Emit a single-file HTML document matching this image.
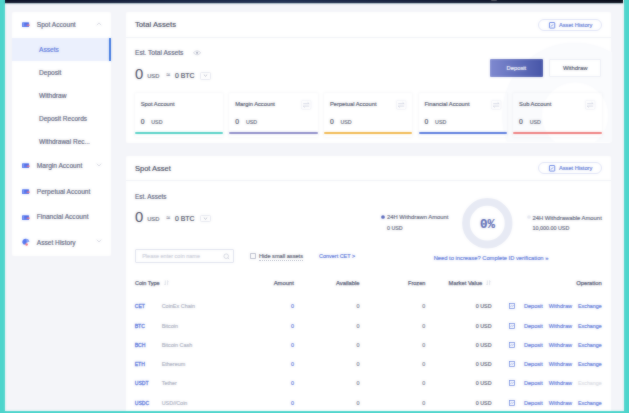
<!DOCTYPE html>
<html><head><meta charset="utf-8">
<style>
*{margin:0;padding:0;box-sizing:border-box}
html,body{width:629px;height:413px;overflow:hidden;background:#f4f5f9;font-family:"Liberation Sans",sans-serif;color:#3a3f55}
.a{position:absolute}
.t{position:absolute;white-space:nowrap;line-height:10px;height:10px;-webkit-text-stroke:0.15px currentColor}
svg{position:absolute;overflow:visible}
</style></head><body>
<div class="a" style="left:0;top:0;width:629px;height:413px;overflow:hidden;background:#f4f5f9">
<div class="a" style="left:12.00px;top:11.60px;width:99.30px;height:244.00px;background:#fff;border-radius:2px"></div>
<div class="a" style="left:12.00px;top:37.70px;width:97.00px;height:23.00px;background:#ebf0fd"></div>
<div class="a" style="left:109.00px;top:37.70px;width:2.30px;height:23.00px;background:#3a74df"></div>
<svg style="left:21.900000000000002px;top:22.0px" width="9" height="6" viewBox="0 0 9 6"><rect x="0" y="0.2" width="7.1" height="4.8" rx="0.6" fill="#5375ef"/><rect x="0.8" y="1.2" width="1.4" height="3" fill="#7f98f5"/><rect x="2.6" y="1.1" width="3.8" height="0.7" fill="#3f62e6"/><rect x="4.5" y="2.4" width="3.3" height="1.4" rx="0.5" fill="#f26a78"/></svg>
<div class="t" style="left:36.80px;top:19.80px;font-size:6.6px;color:#555a76;font-weight:normal;">Spot Account</div>
<svg style="left:96.3px;top:21.9px" width="6" height="4" viewBox="0 0 6 4"><path d="M0.8 3.2 L3 0.9 L5.2 3.2" fill="none" stroke="#bfc3d2" stroke-width="0.65"/></svg>
<div class="t" style="left:39.00px;top:45.00px;font-size:6.6px;color:#5371da;font-weight:normal;">Assets</div>
<div class="t" style="left:39.00px;top:67.60px;font-size:6.6px;color:#555a76;font-weight:normal;">Deposit</div>
<div class="t" style="left:39.00px;top:90.70px;font-size:6.6px;color:#555a76;font-weight:normal;">Withdraw</div>
<div class="t" style="left:39.00px;top:113.50px;font-size:6.5px;color:#555a76;font-weight:normal;">Deposit Records</div>
<div class="t" style="left:39.00px;top:137.00px;font-size:6.5px;color:#555a76;font-weight:normal;">Withdrawal Rec...</div>
<svg style="left:21.900000000000002px;top:162.9px" width="9" height="6" viewBox="0 0 9 6"><rect x="0" y="0.2" width="7.1" height="4.8" rx="0.6" fill="#5375ef"/><rect x="0.8" y="1.2" width="1.4" height="3" fill="#7f98f5"/><rect x="2.6" y="1.1" width="3.8" height="0.7" fill="#3f62e6"/><rect x="4.5" y="2.4" width="3.3" height="1.4" rx="0.5" fill="#f26a78"/></svg>
<div class="t" style="left:36.80px;top:160.70px;font-size:6.6px;color:#555a76;font-weight:normal;">Margin Account</div>
<svg style="left:96.3px;top:162.6px" width="6" height="4" viewBox="0 0 6 4"><path d="M0.8 0.7 L3 3 L5.2 0.7" fill="none" stroke="#bfc3d2" stroke-width="0.65"/></svg>
<svg style="left:21.900000000000002px;top:188.9px" width="9" height="6" viewBox="0 0 9 6"><rect x="0" y="0.2" width="7.1" height="4.8" rx="0.6" fill="#5375ef"/><rect x="0.8" y="1.2" width="1.4" height="3" fill="#7f98f5"/><rect x="2.6" y="1.1" width="3.8" height="0.7" fill="#3f62e6"/><rect x="4.5" y="2.4" width="3.3" height="1.4" rx="0.5" fill="#f26a78"/></svg>
<div class="t" style="left:36.80px;top:186.80px;font-size:6.6px;color:#555a76;font-weight:normal;">Perpetual Account</div>
<svg style="left:21.900000000000002px;top:214.5px" width="9" height="6" viewBox="0 0 9 6"><rect x="0" y="0.2" width="7.1" height="4.8" rx="0.6" fill="#5375ef"/><rect x="0.8" y="1.2" width="1.4" height="3" fill="#7f98f5"/><rect x="2.6" y="1.1" width="3.8" height="0.7" fill="#3f62e6"/><rect x="4.5" y="2.4" width="3.3" height="1.4" rx="0.5" fill="#f26a78"/></svg>
<div class="t" style="left:36.80px;top:212.30px;font-size:6.6px;color:#555a76;font-weight:normal;">Financial Account</div>
<svg style="left:21.8px;top:238.4px" width="8" height="8" viewBox="0 0 8 8"><path d="M0.2 4.2 A3.7 3.7 0 0 1 7.4 3.4 L4.6 4.6 L3.2 6.8 A3 3 0 0 1 0.2 4.2 Z" fill="#5173f0"/><path d="M4.2 0.7 A3.6 3.6 0 0 1 7.4 3.4 L4.6 4.4 Z" fill="#86a0f6"/><circle cx="4.6" cy="6.5" r="1.25" fill="#f2707c"/></svg>
<div class="t" style="left:36.80px;top:237.70px;font-size:6.6px;color:#555a76;font-weight:normal;">Asset History</div>
<svg style="left:96.3px;top:239.4px" width="6" height="4" viewBox="0 0 6 4"><path d="M0.8 0.7 L3 3 L5.2 0.7" fill="none" stroke="#bfc3d2" stroke-width="0.65"/></svg>
<div class="a" style="left:125.60px;top:12.30px;width:485.90px;height:130.80px;background:#fff;border-radius:2px"></div>
<svg style="left:480px;top:38.6px;overflow:hidden" width="131.5" height="103" viewBox="0 0 131.5 103"><circle cx="95" cy="76.4" r="53" fill="none" stroke="#fafbfd" stroke-width="40"/></svg>
<div class="a" style="left:125.60px;top:37.20px;width:485.90px;height:0.80px;background:#f0f2f7"></div>
<div class="t" style="left:135.00px;top:19.90px;font-size:7.7px;color:#3e4358;font-weight:normal;">Total Assets</div>
<div class="a" style="left:538.30px;top:19.10px;width:63.60px;height:11.50px;border:0.7px solid #dfe3f7;border-radius:6px;background:#fff"></div>
<svg style="left:548.8px;top:21.5px" width="6.2" height="6.5" viewBox="0 0 6.2 6.5"><rect x="0.45" y="0.5" width="5.3" height="5.6" rx="0.5" fill="none" stroke="#5b7ae0" stroke-width="0.9"/><path d="M1.7 4.4 L4.3 2.6" fill="none" stroke="#5b7ae0" stroke-width="0.7"/></svg>
<div class="t" style="left:559.00px;top:20.00px;font-size:5.65px;color:#5370d2;font-weight:normal;">Asset History</div>
<div class="t" style="left:135.00px;top:47.70px;font-size:6.6px;color:#555a76;font-weight:normal;">Est. Total Assets</div>
<svg style="left:193.4px;top:49.9px" width="8.2" height="5.6" viewBox="0 0 8.2 5.6"><path d="M0.4 2.8 Q4.1 -1.2 7.8 2.8 Q4.1 6.8 0.4 2.8 Z" fill="none" stroke="#bcc0cf" stroke-width="0.65"/><circle cx="4.1" cy="2.8" r="1.1" fill="#a9aec0"/></svg>
<div class="t" style="left:135.00px;top:68.80px;font-size:14.8px;color:#3d4258;font-weight:normal;-webkit-text-stroke:0">0</div>
<div class="t" style="left:147.20px;top:70.60px;font-size:5.8px;color:#5a5f74;font-weight:normal;">USD</div>
<div class="t" style="left:166.50px;top:69.60px;font-size:6.6px;color:#767b90;font-weight:normal;">&#8776;</div>
<div class="t" style="left:175.00px;top:70.80px;font-size:6.9px;color:#3a3f55;font-weight:normal;">0 BTC</div>
<div class="a" style="left:200.20px;top:71.70px;width:10.50px;height:7.90px;border:0.6px solid #e6e8f0;border-radius:1.5px;box-shadow:0 0 1px rgba(0,0,0,0.05)"></div>
<svg style="left:203px;top:74.3px" width="5" height="3" viewBox="0 0 5 3"><path d="M0.8 0.6 L2.5 2.2 L4.2 0.6" fill="none" stroke="#8a90a6" stroke-width="0.6"/></svg>
<div class="a" style="left:490.00px;top:59.10px;width:52.80px;height:17.60px;background:linear-gradient(90deg,#7f8ad0,#4756a8);border-radius:1px"></div>
<div class="t" style="left:416.40px;width:200px;text-align:center;top:62.90px;font-size:5.8px;color:#ffffff;font-weight:normal;">Deposit</div>
<div class="a" style="left:549.20px;top:59.10px;width:52.10px;height:17.60px;background:#fff;border:0.7px solid #eceef5;border-radius:1px"></div>
<div class="t" style="left:475.20px;width:200px;text-align:center;top:62.90px;font-size:5.9px;color:#4a4f66;font-weight:normal;">Withdraw</div>
<div class="a" style="left:134.70px;top:93.30px;width:88.50px;height:43.70px;box-shadow:0 0 3px rgba(40,50,90,0.07);border-radius:1px"></div>
<div class="a" style="left:134.70px;top:132.00px;width:88.50px;height:2.30px;background:#4fcfc4;border-radius:1.2px"></div>
<div class="t" style="left:140.70px;top:98.70px;font-size:5.75px;color:#4a4f66;font-weight:normal;">Spot Account</div>
<div class="t" style="left:140.70px;top:116.90px;font-size:6.8px;color:#3a3f55;font-weight:normal;">0</div>
<div class="t" style="left:151.30px;top:117.00px;font-size:5.3px;color:#5a5f74;font-weight:normal;">USD</div>
<div class="a" style="left:229.30px;top:93.30px;width:88.50px;height:43.70px;box-shadow:0 0 3px rgba(40,50,90,0.07);border-radius:1px"></div>
<div class="a" style="left:229.30px;top:132.00px;width:88.50px;height:2.30px;background:#8a89c6;border-radius:1.2px"></div>
<div class="t" style="left:235.30px;top:98.70px;font-size:5.75px;color:#4a4f66;font-weight:normal;">Margin Account</div>
<div class="t" style="left:235.30px;top:116.90px;font-size:6.8px;color:#3a3f55;font-weight:normal;">0</div>
<div class="t" style="left:245.90px;top:117.00px;font-size:5.3px;color:#5a5f74;font-weight:normal;">USD</div>
<svg style="left:301.29999999999995px;top:99.9px" width="10.4" height="9.8" viewBox="0 0 10.4 9.8"><rect x="0.35" y="0.35" width="9.7" height="9.1" rx="1.5" fill="#fff" stroke="#eceef5" stroke-width="0.7"/><path d="M2.2 3.7 H8.2 L6.6 2.3 M8.2 6.1 H2.2 L3.8 7.5" fill="none" stroke="#c3c8da" stroke-width="0.7"/></svg>
<div class="a" style="left:323.90px;top:93.30px;width:88.50px;height:43.70px;box-shadow:0 0 3px rgba(40,50,90,0.07);border-radius:1px"></div>
<div class="a" style="left:323.90px;top:132.00px;width:88.50px;height:2.30px;background:#f0b64a;border-radius:1.2px"></div>
<div class="t" style="left:329.90px;top:98.70px;font-size:5.75px;color:#4a4f66;font-weight:normal;">Perpetual Account</div>
<div class="t" style="left:329.90px;top:116.90px;font-size:6.8px;color:#3a3f55;font-weight:normal;">0</div>
<div class="t" style="left:340.50px;top:117.00px;font-size:5.3px;color:#5a5f74;font-weight:normal;">USD</div>
<svg style="left:395.9px;top:99.9px" width="10.4" height="9.8" viewBox="0 0 10.4 9.8"><rect x="0.35" y="0.35" width="9.7" height="9.1" rx="1.5" fill="#fff" stroke="#eceef5" stroke-width="0.7"/><path d="M2.2 3.7 H8.2 L6.6 2.3 M8.2 6.1 H2.2 L3.8 7.5" fill="none" stroke="#c3c8da" stroke-width="0.7"/></svg>
<div class="a" style="left:418.50px;top:93.30px;width:88.50px;height:43.70px;box-shadow:0 0 3px rgba(40,50,90,0.07);border-radius:1px"></div>
<div class="a" style="left:418.50px;top:132.00px;width:88.50px;height:2.30px;background:#5577dc;border-radius:1.2px"></div>
<div class="t" style="left:424.50px;top:98.70px;font-size:5.75px;color:#4a4f66;font-weight:normal;">Financial Account</div>
<div class="t" style="left:424.50px;top:116.90px;font-size:6.8px;color:#3a3f55;font-weight:normal;">0</div>
<div class="t" style="left:435.10px;top:117.00px;font-size:5.3px;color:#5a5f74;font-weight:normal;">USD</div>
<svg style="left:490.49999999999994px;top:99.9px" width="10.4" height="9.8" viewBox="0 0 10.4 9.8"><rect x="0.35" y="0.35" width="9.7" height="9.1" rx="1.5" fill="#fff" stroke="#eceef5" stroke-width="0.7"/><path d="M2.2 3.7 H8.2 L6.6 2.3 M8.2 6.1 H2.2 L3.8 7.5" fill="none" stroke="#c3c8da" stroke-width="0.7"/></svg>
<div class="a" style="left:513.10px;top:93.30px;width:88.50px;height:43.70px;box-shadow:0 0 3px rgba(40,50,90,0.07);border-radius:1px"></div>
<div class="a" style="left:513.10px;top:132.00px;width:88.50px;height:2.30px;background:#ee7b7b;border-radius:1.2px"></div>
<div class="t" style="left:519.10px;top:98.70px;font-size:5.75px;color:#4a4f66;font-weight:normal;">Sub Account</div>
<div class="t" style="left:519.10px;top:116.90px;font-size:6.8px;color:#3a3f55;font-weight:normal;">0</div>
<div class="t" style="left:529.70px;top:117.00px;font-size:5.3px;color:#5a5f74;font-weight:normal;">USD</div>
<svg style="left:585.0999999999999px;top:99.9px" width="10.4" height="9.8" viewBox="0 0 10.4 9.8"><rect x="0.35" y="0.35" width="9.7" height="9.1" rx="1.5" fill="#fff" stroke="#eceef5" stroke-width="0.7"/><path d="M2.2 3.7 H8.2 L6.6 2.3 M8.2 6.1 H2.2 L3.8 7.5" fill="none" stroke="#c3c8da" stroke-width="0.7"/></svg>
<div class="a" style="left:125.60px;top:155.60px;width:485.90px;height:264.40px;background:#fff;border-radius:2px"></div>
<div class="a" style="left:125.60px;top:179.90px;width:485.90px;height:0.80px;background:#f0f2f7"></div>
<div class="t" style="left:135.00px;top:163.50px;font-size:7.5px;color:#3e4358;font-weight:normal;">Spot Asset</div>
<div class="a" style="left:538.30px;top:162.30px;width:63.60px;height:11.50px;border:0.7px solid #dfe3f7;border-radius:6px;background:#fff"></div>
<svg style="left:548.8px;top:164.70000000000002px" width="6.2" height="6.5" viewBox="0 0 6.2 6.5"><rect x="0.45" y="0.5" width="5.3" height="5.6" rx="0.5" fill="none" stroke="#5b7ae0" stroke-width="0.9"/><path d="M1.7 4.4 L4.3 2.6" fill="none" stroke="#5b7ae0" stroke-width="0.7"/></svg>
<div class="t" style="left:559.00px;top:163.20px;font-size:5.65px;color:#5370d2;font-weight:normal;">Asset History</div>
<div class="t" style="left:135.00px;top:192.10px;font-size:6.35px;color:#555a76;font-weight:normal;">Est. Assets</div>
<div class="t" style="left:135.00px;top:212.00px;font-size:14.8px;color:#3d4258;font-weight:normal;-webkit-text-stroke:0">0</div>
<div class="t" style="left:147.20px;top:213.80px;font-size:5.8px;color:#5a5f74;font-weight:normal;">USD</div>
<div class="t" style="left:166.50px;top:212.80px;font-size:6.6px;color:#767b90;font-weight:normal;">&#8776;</div>
<div class="t" style="left:175.00px;top:214.00px;font-size:6.9px;color:#3a3f55;font-weight:normal;">0 BTC</div>
<div class="a" style="left:200.20px;top:214.60px;width:10.50px;height:7.90px;border:0.6px solid #e6e8f0;border-radius:1.5px;box-shadow:0 0 1px rgba(0,0,0,0.05)"></div>
<svg style="left:203px;top:217.2px" width="5" height="3" viewBox="0 0 5 3"><path d="M0.8 0.6 L2.5 2.2 L4.2 0.6" fill="none" stroke="#8a90a6" stroke-width="0.6"/></svg>
<svg style="left:380.6px;top:214.8px" width="4" height="4"><circle cx="2" cy="2" r="1.85" fill="#5161b9"/></svg>
<div class="t" style="left:387.00px;top:211.50px;font-size:5.85px;color:#585d75;font-weight:normal;">24H Withdrawn Amount</div>
<div class="t" style="left:387.00px;top:222.70px;font-size:5.33px;color:#585d75;font-weight:normal;">0 USD</div>
<svg style="left:462px;top:197.6px" width="51" height="51" viewBox="0 0 51 51"><circle cx="25.3" cy="25.2" r="21.3" fill="none" stroke="#e7eaf4" stroke-width="7.8"/></svg>
<div class="t" style="left:387.60px;width:200px;text-align:center;top:219.60px;font-size:12.5px;color:#5767b2;font-weight:bold;font-family:'Liberation Mono',monospace;">0%</div>
<svg style="left:526.5px;top:214.7px" width="4" height="4"><circle cx="2" cy="2" r="1.85" fill="#e6e8f0"/></svg>
<div class="t" style="left:532.40px;top:212.60px;font-size:5.87px;color:#585d75;font-weight:normal;">24H Withdrawable Amount</div>
<div class="t" style="left:532.40px;top:222.80px;font-size:5.42px;color:#585d75;font-weight:normal;">10,000.00 USD</div>
<div class="t" style="left:433.70px;top:253.00px;font-size:5.79px;color:#5470d6;font-weight:normal;">Need to increase? Complete ID verification &#187;</div>
<div class="a" style="left:134.90px;top:249.00px;width:98.80px;height:13.50px;border:0.7px solid #dfe2ee;border-radius:1px"></div>
<div class="t" style="left:142.20px;top:251.20px;font-size:5.5px;color:#c9ccd8;font-weight:normal;">Please enter coin name</div>
<svg style="left:222.6px;top:252.7px" width="7" height="7" viewBox="0 0 7 7"><circle cx="3.2" cy="3.2" r="2.3" fill="none" stroke="#b6bacb" stroke-width="0.6"/><path d="M4.9 4.9 L6.2 6.2" stroke="#b6bacb" stroke-width="0.6"/></svg>
<div class="a" style="left:250.00px;top:252.80px;width:6.10px;height:5.90px;border:0.7px solid #b9bdcc;border-radius:0.8px"></div>
<div class="t" style="left:259.00px;top:250.50px;font-size:5.62px;color:#4a4f66;font-weight:normal;border-bottom:0.6px dotted #b3b7c6;height:auto;line-height:7.1px;top:252.8px">Hide small assets</div>
<div class="t" style="left:319.00px;top:250.90px;font-size:5.48px;color:#4d6ad6;font-weight:normal;">Convert CET &gt;</div>
<div class="t" style="left:135.00px;top:278.20px;font-size:5.5px;color:#565b74;font-weight:normal;-webkit-text-stroke:0.25px currentColor">Coin Type</div>
<svg style="left:164.2px;top:280.4px" width="5" height="5.6" viewBox="0 0 5 5.6"><path d="M1.3 0.4 V5 L0.3 4 M3.6 5.2 V0.6 L4.6 1.6" fill="none" stroke="#c5c9d6" stroke-width="0.55"/></svg>
<div class="t" style="right:335.00px;top:278.20px;font-size:5.9px;color:#565b74;font-weight:normal;-webkit-text-stroke:0.25px currentColor">Amount</div>
<div class="t" style="right:269.50px;top:278.20px;font-size:5.8px;color:#565b74;font-weight:normal;-webkit-text-stroke:0.25px currentColor">Available</div>
<div class="t" style="right:203.70px;top:278.20px;font-size:5.55px;color:#565b74;font-weight:normal;-webkit-text-stroke:0.25px currentColor">Frozen</div>
<div class="t" style="left:448.60px;top:278.20px;font-size:5.8px;color:#565b74;font-weight:normal;-webkit-text-stroke:0.25px currentColor">Market Value</div>
<svg style="left:486px;top:280.4px" width="5" height="5.6" viewBox="0 0 5 5.6"><path d="M1.3 0.4 V5 L0.3 4 M3.6 5.2 V0.6 L4.6 1.6" fill="none" stroke="#c5c9d6" stroke-width="0.55"/></svg>
<div class="t" style="right:27.30px;top:278.20px;font-size:5.8px;color:#565b74;font-weight:normal;-webkit-text-stroke:0.25px currentColor">Operation</div>
<div class="t" style="left:134.70px;top:301.20px;font-size:5.15px;color:#5c78db;font-weight:normal;-webkit-text-stroke:0.3px currentColor">CET</div>
<div class="t" style="left:161.70px;top:301.20px;font-size:5.45px;color:#a6abbc;font-weight:normal;">CoinEx Chain</div>
<div class="t" style="right:335.00px;top:301.20px;font-size:5.4px;color:#4d6ad6;font-weight:normal;">0</div>
<div class="t" style="right:269.50px;top:301.20px;font-size:5.4px;color:#70758a;font-weight:normal;">0</div>
<div class="t" style="right:203.70px;top:301.20px;font-size:5.4px;color:#70758a;font-weight:normal;">0</div>
<div class="t" style="right:137.50px;top:301.20px;font-size:5.33px;color:#555a70;font-weight:normal;">0 USD</div>
<svg style="left:509.4px;top:303.2px" width="6" height="6" viewBox="0 0 6 6"><rect x="0.4" y="0.4" width="5.2" height="5.2" fill="none" stroke="#5a78da" stroke-width="0.7"/><path d="M1.5 3.8 L2.7 2.6 L3.5 3.3 L4.6 2.2" fill="none" stroke="#5a78da" stroke-width="0.55"/></svg>
<div class="t" style="left:523.90px;top:301.20px;font-size:5.6px;color:#5470d6;font-weight:normal;">Deposit</div>
<div class="t" style="left:548.80px;top:301.20px;font-size:5.6px;color:#5470d6;font-weight:normal;">Withdraw</div>
<div class="t" style="left:578.00px;top:301.20px;font-size:5.33px;color:#5470d6;font-weight:normal;">Exchange</div>
<div class="t" style="left:134.70px;top:320.60px;font-size:5.15px;color:#5c78db;font-weight:normal;-webkit-text-stroke:0.3px currentColor">BTC</div>
<div class="t" style="left:161.70px;top:320.60px;font-size:5.45px;color:#a6abbc;font-weight:normal;">Bitcoin</div>
<div class="t" style="right:335.00px;top:320.60px;font-size:5.4px;color:#4d6ad6;font-weight:normal;">0</div>
<div class="t" style="right:269.50px;top:320.60px;font-size:5.4px;color:#70758a;font-weight:normal;">0</div>
<div class="t" style="right:203.70px;top:320.60px;font-size:5.4px;color:#70758a;font-weight:normal;">0</div>
<div class="t" style="right:137.50px;top:320.60px;font-size:5.33px;color:#555a70;font-weight:normal;">0 USD</div>
<svg style="left:509.4px;top:322.6px" width="6" height="6" viewBox="0 0 6 6"><rect x="0.4" y="0.4" width="5.2" height="5.2" fill="none" stroke="#5a78da" stroke-width="0.7"/><path d="M1.5 3.8 L2.7 2.6 L3.5 3.3 L4.6 2.2" fill="none" stroke="#5a78da" stroke-width="0.55"/></svg>
<div class="t" style="left:523.90px;top:320.60px;font-size:5.6px;color:#5470d6;font-weight:normal;">Deposit</div>
<div class="t" style="left:548.80px;top:320.60px;font-size:5.6px;color:#5470d6;font-weight:normal;">Withdraw</div>
<div class="t" style="left:578.00px;top:320.60px;font-size:5.33px;color:#5470d6;font-weight:normal;">Exchange</div>
<div class="t" style="left:134.70px;top:339.90px;font-size:5.15px;color:#5c78db;font-weight:normal;-webkit-text-stroke:0.3px currentColor">BCH</div>
<div class="t" style="left:161.70px;top:339.90px;font-size:5.45px;color:#a6abbc;font-weight:normal;">Bitcoin Cash</div>
<div class="t" style="right:335.00px;top:339.90px;font-size:5.4px;color:#4d6ad6;font-weight:normal;">0</div>
<div class="t" style="right:269.50px;top:339.90px;font-size:5.4px;color:#70758a;font-weight:normal;">0</div>
<div class="t" style="right:203.70px;top:339.90px;font-size:5.4px;color:#70758a;font-weight:normal;">0</div>
<div class="t" style="right:137.50px;top:339.90px;font-size:5.33px;color:#555a70;font-weight:normal;">0 USD</div>
<svg style="left:509.4px;top:341.9px" width="6" height="6" viewBox="0 0 6 6"><rect x="0.4" y="0.4" width="5.2" height="5.2" fill="none" stroke="#5a78da" stroke-width="0.7"/><path d="M1.5 3.8 L2.7 2.6 L3.5 3.3 L4.6 2.2" fill="none" stroke="#5a78da" stroke-width="0.55"/></svg>
<div class="t" style="left:523.90px;top:339.90px;font-size:5.6px;color:#5470d6;font-weight:normal;">Deposit</div>
<div class="t" style="left:548.80px;top:339.90px;font-size:5.6px;color:#5470d6;font-weight:normal;">Withdraw</div>
<div class="t" style="left:578.00px;top:339.90px;font-size:5.33px;color:#5470d6;font-weight:normal;">Exchange</div>
<div class="t" style="left:134.70px;top:359.10px;font-size:5.15px;color:#5c78db;font-weight:normal;-webkit-text-stroke:0.3px currentColor">ETH</div>
<div class="t" style="left:161.70px;top:359.10px;font-size:5.45px;color:#a6abbc;font-weight:normal;">Ethereum</div>
<div class="t" style="right:335.00px;top:359.10px;font-size:5.4px;color:#4d6ad6;font-weight:normal;">0</div>
<div class="t" style="right:269.50px;top:359.10px;font-size:5.4px;color:#70758a;font-weight:normal;">0</div>
<div class="t" style="right:203.70px;top:359.10px;font-size:5.4px;color:#70758a;font-weight:normal;">0</div>
<div class="t" style="right:137.50px;top:359.10px;font-size:5.33px;color:#555a70;font-weight:normal;">0 USD</div>
<svg style="left:509.4px;top:361.1px" width="6" height="6" viewBox="0 0 6 6"><rect x="0.4" y="0.4" width="5.2" height="5.2" fill="none" stroke="#5a78da" stroke-width="0.7"/><path d="M1.5 3.8 L2.7 2.6 L3.5 3.3 L4.6 2.2" fill="none" stroke="#5a78da" stroke-width="0.55"/></svg>
<div class="t" style="left:523.90px;top:359.10px;font-size:5.6px;color:#5470d6;font-weight:normal;">Deposit</div>
<div class="t" style="left:548.80px;top:359.10px;font-size:5.6px;color:#5470d6;font-weight:normal;">Withdraw</div>
<div class="t" style="left:578.00px;top:359.10px;font-size:5.33px;color:#5470d6;font-weight:normal;">Exchange</div>
<div class="t" style="left:134.70px;top:378.30px;font-size:5.15px;color:#5c78db;font-weight:normal;-webkit-text-stroke:0.3px currentColor">USDT</div>
<div class="t" style="left:161.70px;top:378.30px;font-size:5.45px;color:#a6abbc;font-weight:normal;">Tether</div>
<div class="t" style="right:335.00px;top:378.30px;font-size:5.4px;color:#4d6ad6;font-weight:normal;">0</div>
<div class="t" style="right:269.50px;top:378.30px;font-size:5.4px;color:#70758a;font-weight:normal;">0</div>
<div class="t" style="right:203.70px;top:378.30px;font-size:5.4px;color:#70758a;font-weight:normal;">0</div>
<div class="t" style="right:137.50px;top:378.30px;font-size:5.33px;color:#555a70;font-weight:normal;">0 USD</div>
<svg style="left:509.4px;top:380.3px" width="6" height="6" viewBox="0 0 6 6"><rect x="0.4" y="0.4" width="5.2" height="5.2" fill="none" stroke="#5a78da" stroke-width="0.7"/><path d="M1.5 3.8 L2.7 2.6 L3.5 3.3 L4.6 2.2" fill="none" stroke="#5a78da" stroke-width="0.55"/></svg>
<div class="t" style="left:523.90px;top:378.30px;font-size:5.6px;color:#5470d6;font-weight:normal;">Deposit</div>
<div class="t" style="left:548.80px;top:378.30px;font-size:5.6px;color:#5470d6;font-weight:normal;">Withdraw</div>
<div class="t" style="left:578.00px;top:378.30px;font-size:5.33px;color:#d9dbe3;font-weight:normal;">Exchange</div>
<div class="t" style="left:134.70px;top:397.60px;font-size:5.15px;color:#5c78db;font-weight:normal;-webkit-text-stroke:0.3px currentColor">USDC</div>
<div class="t" style="left:161.70px;top:397.60px;font-size:5.45px;color:#a6abbc;font-weight:normal;">USD//Coin</div>
<div class="t" style="right:335.00px;top:397.60px;font-size:5.4px;color:#4d6ad6;font-weight:normal;">0</div>
<div class="t" style="right:269.50px;top:397.60px;font-size:5.4px;color:#70758a;font-weight:normal;">0</div>
<div class="t" style="right:203.70px;top:397.60px;font-size:5.4px;color:#70758a;font-weight:normal;">0</div>
<div class="t" style="right:137.50px;top:397.60px;font-size:5.33px;color:#555a70;font-weight:normal;">0 USD</div>
<svg style="left:509.4px;top:399.6px" width="6" height="6" viewBox="0 0 6 6"><rect x="0.4" y="0.4" width="5.2" height="5.2" fill="none" stroke="#5a78da" stroke-width="0.7"/><path d="M1.5 3.8 L2.7 2.6 L3.5 3.3 L4.6 2.2" fill="none" stroke="#5a78da" stroke-width="0.55"/></svg>
<div class="t" style="left:523.90px;top:397.60px;font-size:5.6px;color:#5470d6;font-weight:normal;">Deposit</div>
<div class="t" style="left:548.80px;top:397.60px;font-size:5.6px;color:#5470d6;font-weight:normal;">Withdraw</div>
<div class="t" style="left:578.00px;top:397.60px;font-size:5.33px;color:#5470d6;font-weight:normal;">Exchange</div>
<div class="a" style="left:0.00px;top:0.00px;width:4.70px;height:413.00px;background:#4dd5cc"></div>
<div class="a" style="left:4.70px;top:0.00px;width:618.80px;height:2.90px;background:linear-gradient(90deg,#0f1429 0%,#1a2644 25%,#203052 45%,#18223e 65%,#0d1222 90%,#0b0f1c 100%)"></div>
<div class="a" style="left:4.70px;top:2.90px;width:618.80px;height:0.80px;background:rgba(70,120,135,0.35)"></div>
<div class="a" style="left:491.20px;top:0.00px;width:5.80px;height:1.10px;background:#50535f;border-radius:0 0 2px 2px"></div>
<div class="a" style="left:623.50px;top:0.00px;width:5.50px;height:413.00px;background:#4dd5cc"></div>
<div class="a" style="left:0.00px;top:411.10px;width:629.00px;height:1.90px;background:#4dd5cc"></div>
</div>
<div class="a" style="left:0;top:0;width:629px;height:413px;overflow:hidden;background:#f4f5f9;filter:blur(1px);opacity:0.5">
<div class="a" style="left:12.00px;top:11.60px;width:99.30px;height:244.00px;background:#fff;border-radius:2px"></div>
<div class="a" style="left:12.00px;top:37.70px;width:97.00px;height:23.00px;background:#ebf0fd"></div>
<div class="a" style="left:109.00px;top:37.70px;width:2.30px;height:23.00px;background:#3a74df"></div>
<svg style="left:21.900000000000002px;top:22.0px" width="9" height="6" viewBox="0 0 9 6"><rect x="0" y="0.2" width="7.1" height="4.8" rx="0.6" fill="#5375ef"/><rect x="0.8" y="1.2" width="1.4" height="3" fill="#7f98f5"/><rect x="2.6" y="1.1" width="3.8" height="0.7" fill="#3f62e6"/><rect x="4.5" y="2.4" width="3.3" height="1.4" rx="0.5" fill="#f26a78"/></svg>
<div class="t" style="left:36.80px;top:19.80px;font-size:6.6px;color:#555a76;font-weight:normal;">Spot Account</div>
<svg style="left:96.3px;top:21.9px" width="6" height="4" viewBox="0 0 6 4"><path d="M0.8 3.2 L3 0.9 L5.2 3.2" fill="none" stroke="#bfc3d2" stroke-width="0.65"/></svg>
<div class="t" style="left:39.00px;top:45.00px;font-size:6.6px;color:#5371da;font-weight:normal;">Assets</div>
<div class="t" style="left:39.00px;top:67.60px;font-size:6.6px;color:#555a76;font-weight:normal;">Deposit</div>
<div class="t" style="left:39.00px;top:90.70px;font-size:6.6px;color:#555a76;font-weight:normal;">Withdraw</div>
<div class="t" style="left:39.00px;top:113.50px;font-size:6.5px;color:#555a76;font-weight:normal;">Deposit Records</div>
<div class="t" style="left:39.00px;top:137.00px;font-size:6.5px;color:#555a76;font-weight:normal;">Withdrawal Rec...</div>
<svg style="left:21.900000000000002px;top:162.9px" width="9" height="6" viewBox="0 0 9 6"><rect x="0" y="0.2" width="7.1" height="4.8" rx="0.6" fill="#5375ef"/><rect x="0.8" y="1.2" width="1.4" height="3" fill="#7f98f5"/><rect x="2.6" y="1.1" width="3.8" height="0.7" fill="#3f62e6"/><rect x="4.5" y="2.4" width="3.3" height="1.4" rx="0.5" fill="#f26a78"/></svg>
<div class="t" style="left:36.80px;top:160.70px;font-size:6.6px;color:#555a76;font-weight:normal;">Margin Account</div>
<svg style="left:96.3px;top:162.6px" width="6" height="4" viewBox="0 0 6 4"><path d="M0.8 0.7 L3 3 L5.2 0.7" fill="none" stroke="#bfc3d2" stroke-width="0.65"/></svg>
<svg style="left:21.900000000000002px;top:188.9px" width="9" height="6" viewBox="0 0 9 6"><rect x="0" y="0.2" width="7.1" height="4.8" rx="0.6" fill="#5375ef"/><rect x="0.8" y="1.2" width="1.4" height="3" fill="#7f98f5"/><rect x="2.6" y="1.1" width="3.8" height="0.7" fill="#3f62e6"/><rect x="4.5" y="2.4" width="3.3" height="1.4" rx="0.5" fill="#f26a78"/></svg>
<div class="t" style="left:36.80px;top:186.80px;font-size:6.6px;color:#555a76;font-weight:normal;">Perpetual Account</div>
<svg style="left:21.900000000000002px;top:214.5px" width="9" height="6" viewBox="0 0 9 6"><rect x="0" y="0.2" width="7.1" height="4.8" rx="0.6" fill="#5375ef"/><rect x="0.8" y="1.2" width="1.4" height="3" fill="#7f98f5"/><rect x="2.6" y="1.1" width="3.8" height="0.7" fill="#3f62e6"/><rect x="4.5" y="2.4" width="3.3" height="1.4" rx="0.5" fill="#f26a78"/></svg>
<div class="t" style="left:36.80px;top:212.30px;font-size:6.6px;color:#555a76;font-weight:normal;">Financial Account</div>
<svg style="left:21.8px;top:238.4px" width="8" height="8" viewBox="0 0 8 8"><path d="M0.2 4.2 A3.7 3.7 0 0 1 7.4 3.4 L4.6 4.6 L3.2 6.8 A3 3 0 0 1 0.2 4.2 Z" fill="#5173f0"/><path d="M4.2 0.7 A3.6 3.6 0 0 1 7.4 3.4 L4.6 4.4 Z" fill="#86a0f6"/><circle cx="4.6" cy="6.5" r="1.25" fill="#f2707c"/></svg>
<div class="t" style="left:36.80px;top:237.70px;font-size:6.6px;color:#555a76;font-weight:normal;">Asset History</div>
<svg style="left:96.3px;top:239.4px" width="6" height="4" viewBox="0 0 6 4"><path d="M0.8 0.7 L3 3 L5.2 0.7" fill="none" stroke="#bfc3d2" stroke-width="0.65"/></svg>
<div class="a" style="left:125.60px;top:12.30px;width:485.90px;height:130.80px;background:#fff;border-radius:2px"></div>
<svg style="left:480px;top:38.6px;overflow:hidden" width="131.5" height="103" viewBox="0 0 131.5 103"><circle cx="95" cy="76.4" r="53" fill="none" stroke="#fafbfd" stroke-width="40"/></svg>
<div class="a" style="left:125.60px;top:37.20px;width:485.90px;height:0.80px;background:#f0f2f7"></div>
<div class="t" style="left:135.00px;top:19.90px;font-size:7.7px;color:#3e4358;font-weight:normal;">Total Assets</div>
<div class="a" style="left:538.30px;top:19.10px;width:63.60px;height:11.50px;border:0.7px solid #dfe3f7;border-radius:6px;background:#fff"></div>
<svg style="left:548.8px;top:21.5px" width="6.2" height="6.5" viewBox="0 0 6.2 6.5"><rect x="0.45" y="0.5" width="5.3" height="5.6" rx="0.5" fill="none" stroke="#5b7ae0" stroke-width="0.9"/><path d="M1.7 4.4 L4.3 2.6" fill="none" stroke="#5b7ae0" stroke-width="0.7"/></svg>
<div class="t" style="left:559.00px;top:20.00px;font-size:5.65px;color:#5370d2;font-weight:normal;">Asset History</div>
<div class="t" style="left:135.00px;top:47.70px;font-size:6.6px;color:#555a76;font-weight:normal;">Est. Total Assets</div>
<svg style="left:193.4px;top:49.9px" width="8.2" height="5.6" viewBox="0 0 8.2 5.6"><path d="M0.4 2.8 Q4.1 -1.2 7.8 2.8 Q4.1 6.8 0.4 2.8 Z" fill="none" stroke="#bcc0cf" stroke-width="0.65"/><circle cx="4.1" cy="2.8" r="1.1" fill="#a9aec0"/></svg>
<div class="t" style="left:135.00px;top:68.80px;font-size:14.8px;color:#3d4258;font-weight:normal;-webkit-text-stroke:0">0</div>
<div class="t" style="left:147.20px;top:70.60px;font-size:5.8px;color:#5a5f74;font-weight:normal;">USD</div>
<div class="t" style="left:166.50px;top:69.60px;font-size:6.6px;color:#767b90;font-weight:normal;">&#8776;</div>
<div class="t" style="left:175.00px;top:70.80px;font-size:6.9px;color:#3a3f55;font-weight:normal;">0 BTC</div>
<div class="a" style="left:200.20px;top:71.70px;width:10.50px;height:7.90px;border:0.6px solid #e6e8f0;border-radius:1.5px;box-shadow:0 0 1px rgba(0,0,0,0.05)"></div>
<svg style="left:203px;top:74.3px" width="5" height="3" viewBox="0 0 5 3"><path d="M0.8 0.6 L2.5 2.2 L4.2 0.6" fill="none" stroke="#8a90a6" stroke-width="0.6"/></svg>
<div class="a" style="left:490.00px;top:59.10px;width:52.80px;height:17.60px;background:linear-gradient(90deg,#7f8ad0,#4756a8);border-radius:1px"></div>
<div class="t" style="left:416.40px;width:200px;text-align:center;top:62.90px;font-size:5.8px;color:#ffffff;font-weight:normal;">Deposit</div>
<div class="a" style="left:549.20px;top:59.10px;width:52.10px;height:17.60px;background:#fff;border:0.7px solid #eceef5;border-radius:1px"></div>
<div class="t" style="left:475.20px;width:200px;text-align:center;top:62.90px;font-size:5.9px;color:#4a4f66;font-weight:normal;">Withdraw</div>
<div class="a" style="left:134.70px;top:93.30px;width:88.50px;height:43.70px;box-shadow:0 0 3px rgba(40,50,90,0.07);border-radius:1px"></div>
<div class="a" style="left:134.70px;top:132.00px;width:88.50px;height:2.30px;background:#4fcfc4;border-radius:1.2px"></div>
<div class="t" style="left:140.70px;top:98.70px;font-size:5.75px;color:#4a4f66;font-weight:normal;">Spot Account</div>
<div class="t" style="left:140.70px;top:116.90px;font-size:6.8px;color:#3a3f55;font-weight:normal;">0</div>
<div class="t" style="left:151.30px;top:117.00px;font-size:5.3px;color:#5a5f74;font-weight:normal;">USD</div>
<div class="a" style="left:229.30px;top:93.30px;width:88.50px;height:43.70px;box-shadow:0 0 3px rgba(40,50,90,0.07);border-radius:1px"></div>
<div class="a" style="left:229.30px;top:132.00px;width:88.50px;height:2.30px;background:#8a89c6;border-radius:1.2px"></div>
<div class="t" style="left:235.30px;top:98.70px;font-size:5.75px;color:#4a4f66;font-weight:normal;">Margin Account</div>
<div class="t" style="left:235.30px;top:116.90px;font-size:6.8px;color:#3a3f55;font-weight:normal;">0</div>
<div class="t" style="left:245.90px;top:117.00px;font-size:5.3px;color:#5a5f74;font-weight:normal;">USD</div>
<svg style="left:301.29999999999995px;top:99.9px" width="10.4" height="9.8" viewBox="0 0 10.4 9.8"><rect x="0.35" y="0.35" width="9.7" height="9.1" rx="1.5" fill="#fff" stroke="#eceef5" stroke-width="0.7"/><path d="M2.2 3.7 H8.2 L6.6 2.3 M8.2 6.1 H2.2 L3.8 7.5" fill="none" stroke="#c3c8da" stroke-width="0.7"/></svg>
<div class="a" style="left:323.90px;top:93.30px;width:88.50px;height:43.70px;box-shadow:0 0 3px rgba(40,50,90,0.07);border-radius:1px"></div>
<div class="a" style="left:323.90px;top:132.00px;width:88.50px;height:2.30px;background:#f0b64a;border-radius:1.2px"></div>
<div class="t" style="left:329.90px;top:98.70px;font-size:5.75px;color:#4a4f66;font-weight:normal;">Perpetual Account</div>
<div class="t" style="left:329.90px;top:116.90px;font-size:6.8px;color:#3a3f55;font-weight:normal;">0</div>
<div class="t" style="left:340.50px;top:117.00px;font-size:5.3px;color:#5a5f74;font-weight:normal;">USD</div>
<svg style="left:395.9px;top:99.9px" width="10.4" height="9.8" viewBox="0 0 10.4 9.8"><rect x="0.35" y="0.35" width="9.7" height="9.1" rx="1.5" fill="#fff" stroke="#eceef5" stroke-width="0.7"/><path d="M2.2 3.7 H8.2 L6.6 2.3 M8.2 6.1 H2.2 L3.8 7.5" fill="none" stroke="#c3c8da" stroke-width="0.7"/></svg>
<div class="a" style="left:418.50px;top:93.30px;width:88.50px;height:43.70px;box-shadow:0 0 3px rgba(40,50,90,0.07);border-radius:1px"></div>
<div class="a" style="left:418.50px;top:132.00px;width:88.50px;height:2.30px;background:#5577dc;border-radius:1.2px"></div>
<div class="t" style="left:424.50px;top:98.70px;font-size:5.75px;color:#4a4f66;font-weight:normal;">Financial Account</div>
<div class="t" style="left:424.50px;top:116.90px;font-size:6.8px;color:#3a3f55;font-weight:normal;">0</div>
<div class="t" style="left:435.10px;top:117.00px;font-size:5.3px;color:#5a5f74;font-weight:normal;">USD</div>
<svg style="left:490.49999999999994px;top:99.9px" width="10.4" height="9.8" viewBox="0 0 10.4 9.8"><rect x="0.35" y="0.35" width="9.7" height="9.1" rx="1.5" fill="#fff" stroke="#eceef5" stroke-width="0.7"/><path d="M2.2 3.7 H8.2 L6.6 2.3 M8.2 6.1 H2.2 L3.8 7.5" fill="none" stroke="#c3c8da" stroke-width="0.7"/></svg>
<div class="a" style="left:513.10px;top:93.30px;width:88.50px;height:43.70px;box-shadow:0 0 3px rgba(40,50,90,0.07);border-radius:1px"></div>
<div class="a" style="left:513.10px;top:132.00px;width:88.50px;height:2.30px;background:#ee7b7b;border-radius:1.2px"></div>
<div class="t" style="left:519.10px;top:98.70px;font-size:5.75px;color:#4a4f66;font-weight:normal;">Sub Account</div>
<div class="t" style="left:519.10px;top:116.90px;font-size:6.8px;color:#3a3f55;font-weight:normal;">0</div>
<div class="t" style="left:529.70px;top:117.00px;font-size:5.3px;color:#5a5f74;font-weight:normal;">USD</div>
<svg style="left:585.0999999999999px;top:99.9px" width="10.4" height="9.8" viewBox="0 0 10.4 9.8"><rect x="0.35" y="0.35" width="9.7" height="9.1" rx="1.5" fill="#fff" stroke="#eceef5" stroke-width="0.7"/><path d="M2.2 3.7 H8.2 L6.6 2.3 M8.2 6.1 H2.2 L3.8 7.5" fill="none" stroke="#c3c8da" stroke-width="0.7"/></svg>
<div class="a" style="left:125.60px;top:155.60px;width:485.90px;height:264.40px;background:#fff;border-radius:2px"></div>
<div class="a" style="left:125.60px;top:179.90px;width:485.90px;height:0.80px;background:#f0f2f7"></div>
<div class="t" style="left:135.00px;top:163.50px;font-size:7.5px;color:#3e4358;font-weight:normal;">Spot Asset</div>
<div class="a" style="left:538.30px;top:162.30px;width:63.60px;height:11.50px;border:0.7px solid #dfe3f7;border-radius:6px;background:#fff"></div>
<svg style="left:548.8px;top:164.70000000000002px" width="6.2" height="6.5" viewBox="0 0 6.2 6.5"><rect x="0.45" y="0.5" width="5.3" height="5.6" rx="0.5" fill="none" stroke="#5b7ae0" stroke-width="0.9"/><path d="M1.7 4.4 L4.3 2.6" fill="none" stroke="#5b7ae0" stroke-width="0.7"/></svg>
<div class="t" style="left:559.00px;top:163.20px;font-size:5.65px;color:#5370d2;font-weight:normal;">Asset History</div>
<div class="t" style="left:135.00px;top:192.10px;font-size:6.35px;color:#555a76;font-weight:normal;">Est. Assets</div>
<div class="t" style="left:135.00px;top:212.00px;font-size:14.8px;color:#3d4258;font-weight:normal;-webkit-text-stroke:0">0</div>
<div class="t" style="left:147.20px;top:213.80px;font-size:5.8px;color:#5a5f74;font-weight:normal;">USD</div>
<div class="t" style="left:166.50px;top:212.80px;font-size:6.6px;color:#767b90;font-weight:normal;">&#8776;</div>
<div class="t" style="left:175.00px;top:214.00px;font-size:6.9px;color:#3a3f55;font-weight:normal;">0 BTC</div>
<div class="a" style="left:200.20px;top:214.60px;width:10.50px;height:7.90px;border:0.6px solid #e6e8f0;border-radius:1.5px;box-shadow:0 0 1px rgba(0,0,0,0.05)"></div>
<svg style="left:203px;top:217.2px" width="5" height="3" viewBox="0 0 5 3"><path d="M0.8 0.6 L2.5 2.2 L4.2 0.6" fill="none" stroke="#8a90a6" stroke-width="0.6"/></svg>
<svg style="left:380.6px;top:214.8px" width="4" height="4"><circle cx="2" cy="2" r="1.85" fill="#5161b9"/></svg>
<div class="t" style="left:387.00px;top:211.50px;font-size:5.85px;color:#585d75;font-weight:normal;">24H Withdrawn Amount</div>
<div class="t" style="left:387.00px;top:222.70px;font-size:5.33px;color:#585d75;font-weight:normal;">0 USD</div>
<svg style="left:462px;top:197.6px" width="51" height="51" viewBox="0 0 51 51"><circle cx="25.3" cy="25.2" r="21.3" fill="none" stroke="#e7eaf4" stroke-width="7.8"/></svg>
<div class="t" style="left:387.60px;width:200px;text-align:center;top:219.60px;font-size:12.5px;color:#5767b2;font-weight:bold;font-family:'Liberation Mono',monospace;">0%</div>
<svg style="left:526.5px;top:214.7px" width="4" height="4"><circle cx="2" cy="2" r="1.85" fill="#e6e8f0"/></svg>
<div class="t" style="left:532.40px;top:212.60px;font-size:5.87px;color:#585d75;font-weight:normal;">24H Withdrawable Amount</div>
<div class="t" style="left:532.40px;top:222.80px;font-size:5.42px;color:#585d75;font-weight:normal;">10,000.00 USD</div>
<div class="t" style="left:433.70px;top:253.00px;font-size:5.79px;color:#5470d6;font-weight:normal;">Need to increase? Complete ID verification &#187;</div>
<div class="a" style="left:134.90px;top:249.00px;width:98.80px;height:13.50px;border:0.7px solid #dfe2ee;border-radius:1px"></div>
<div class="t" style="left:142.20px;top:251.20px;font-size:5.5px;color:#c9ccd8;font-weight:normal;">Please enter coin name</div>
<svg style="left:222.6px;top:252.7px" width="7" height="7" viewBox="0 0 7 7"><circle cx="3.2" cy="3.2" r="2.3" fill="none" stroke="#b6bacb" stroke-width="0.6"/><path d="M4.9 4.9 L6.2 6.2" stroke="#b6bacb" stroke-width="0.6"/></svg>
<div class="a" style="left:250.00px;top:252.80px;width:6.10px;height:5.90px;border:0.7px solid #b9bdcc;border-radius:0.8px"></div>
<div class="t" style="left:259.00px;top:250.50px;font-size:5.62px;color:#4a4f66;font-weight:normal;border-bottom:0.6px dotted #b3b7c6;height:auto;line-height:7.1px;top:252.8px">Hide small assets</div>
<div class="t" style="left:319.00px;top:250.90px;font-size:5.48px;color:#4d6ad6;font-weight:normal;">Convert CET &gt;</div>
<div class="t" style="left:135.00px;top:278.20px;font-size:5.5px;color:#565b74;font-weight:normal;-webkit-text-stroke:0.25px currentColor">Coin Type</div>
<svg style="left:164.2px;top:280.4px" width="5" height="5.6" viewBox="0 0 5 5.6"><path d="M1.3 0.4 V5 L0.3 4 M3.6 5.2 V0.6 L4.6 1.6" fill="none" stroke="#c5c9d6" stroke-width="0.55"/></svg>
<div class="t" style="right:335.00px;top:278.20px;font-size:5.9px;color:#565b74;font-weight:normal;-webkit-text-stroke:0.25px currentColor">Amount</div>
<div class="t" style="right:269.50px;top:278.20px;font-size:5.8px;color:#565b74;font-weight:normal;-webkit-text-stroke:0.25px currentColor">Available</div>
<div class="t" style="right:203.70px;top:278.20px;font-size:5.55px;color:#565b74;font-weight:normal;-webkit-text-stroke:0.25px currentColor">Frozen</div>
<div class="t" style="left:448.60px;top:278.20px;font-size:5.8px;color:#565b74;font-weight:normal;-webkit-text-stroke:0.25px currentColor">Market Value</div>
<svg style="left:486px;top:280.4px" width="5" height="5.6" viewBox="0 0 5 5.6"><path d="M1.3 0.4 V5 L0.3 4 M3.6 5.2 V0.6 L4.6 1.6" fill="none" stroke="#c5c9d6" stroke-width="0.55"/></svg>
<div class="t" style="right:27.30px;top:278.20px;font-size:5.8px;color:#565b74;font-weight:normal;-webkit-text-stroke:0.25px currentColor">Operation</div>
<div class="t" style="left:134.70px;top:301.20px;font-size:5.15px;color:#5c78db;font-weight:normal;-webkit-text-stroke:0.3px currentColor">CET</div>
<div class="t" style="left:161.70px;top:301.20px;font-size:5.45px;color:#a6abbc;font-weight:normal;">CoinEx Chain</div>
<div class="t" style="right:335.00px;top:301.20px;font-size:5.4px;color:#4d6ad6;font-weight:normal;">0</div>
<div class="t" style="right:269.50px;top:301.20px;font-size:5.4px;color:#70758a;font-weight:normal;">0</div>
<div class="t" style="right:203.70px;top:301.20px;font-size:5.4px;color:#70758a;font-weight:normal;">0</div>
<div class="t" style="right:137.50px;top:301.20px;font-size:5.33px;color:#555a70;font-weight:normal;">0 USD</div>
<svg style="left:509.4px;top:303.2px" width="6" height="6" viewBox="0 0 6 6"><rect x="0.4" y="0.4" width="5.2" height="5.2" fill="none" stroke="#5a78da" stroke-width="0.7"/><path d="M1.5 3.8 L2.7 2.6 L3.5 3.3 L4.6 2.2" fill="none" stroke="#5a78da" stroke-width="0.55"/></svg>
<div class="t" style="left:523.90px;top:301.20px;font-size:5.6px;color:#5470d6;font-weight:normal;">Deposit</div>
<div class="t" style="left:548.80px;top:301.20px;font-size:5.6px;color:#5470d6;font-weight:normal;">Withdraw</div>
<div class="t" style="left:578.00px;top:301.20px;font-size:5.33px;color:#5470d6;font-weight:normal;">Exchange</div>
<div class="t" style="left:134.70px;top:320.60px;font-size:5.15px;color:#5c78db;font-weight:normal;-webkit-text-stroke:0.3px currentColor">BTC</div>
<div class="t" style="left:161.70px;top:320.60px;font-size:5.45px;color:#a6abbc;font-weight:normal;">Bitcoin</div>
<div class="t" style="right:335.00px;top:320.60px;font-size:5.4px;color:#4d6ad6;font-weight:normal;">0</div>
<div class="t" style="right:269.50px;top:320.60px;font-size:5.4px;color:#70758a;font-weight:normal;">0</div>
<div class="t" style="right:203.70px;top:320.60px;font-size:5.4px;color:#70758a;font-weight:normal;">0</div>
<div class="t" style="right:137.50px;top:320.60px;font-size:5.33px;color:#555a70;font-weight:normal;">0 USD</div>
<svg style="left:509.4px;top:322.6px" width="6" height="6" viewBox="0 0 6 6"><rect x="0.4" y="0.4" width="5.2" height="5.2" fill="none" stroke="#5a78da" stroke-width="0.7"/><path d="M1.5 3.8 L2.7 2.6 L3.5 3.3 L4.6 2.2" fill="none" stroke="#5a78da" stroke-width="0.55"/></svg>
<div class="t" style="left:523.90px;top:320.60px;font-size:5.6px;color:#5470d6;font-weight:normal;">Deposit</div>
<div class="t" style="left:548.80px;top:320.60px;font-size:5.6px;color:#5470d6;font-weight:normal;">Withdraw</div>
<div class="t" style="left:578.00px;top:320.60px;font-size:5.33px;color:#5470d6;font-weight:normal;">Exchange</div>
<div class="t" style="left:134.70px;top:339.90px;font-size:5.15px;color:#5c78db;font-weight:normal;-webkit-text-stroke:0.3px currentColor">BCH</div>
<div class="t" style="left:161.70px;top:339.90px;font-size:5.45px;color:#a6abbc;font-weight:normal;">Bitcoin Cash</div>
<div class="t" style="right:335.00px;top:339.90px;font-size:5.4px;color:#4d6ad6;font-weight:normal;">0</div>
<div class="t" style="right:269.50px;top:339.90px;font-size:5.4px;color:#70758a;font-weight:normal;">0</div>
<div class="t" style="right:203.70px;top:339.90px;font-size:5.4px;color:#70758a;font-weight:normal;">0</div>
<div class="t" style="right:137.50px;top:339.90px;font-size:5.33px;color:#555a70;font-weight:normal;">0 USD</div>
<svg style="left:509.4px;top:341.9px" width="6" height="6" viewBox="0 0 6 6"><rect x="0.4" y="0.4" width="5.2" height="5.2" fill="none" stroke="#5a78da" stroke-width="0.7"/><path d="M1.5 3.8 L2.7 2.6 L3.5 3.3 L4.6 2.2" fill="none" stroke="#5a78da" stroke-width="0.55"/></svg>
<div class="t" style="left:523.90px;top:339.90px;font-size:5.6px;color:#5470d6;font-weight:normal;">Deposit</div>
<div class="t" style="left:548.80px;top:339.90px;font-size:5.6px;color:#5470d6;font-weight:normal;">Withdraw</div>
<div class="t" style="left:578.00px;top:339.90px;font-size:5.33px;color:#5470d6;font-weight:normal;">Exchange</div>
<div class="t" style="left:134.70px;top:359.10px;font-size:5.15px;color:#5c78db;font-weight:normal;-webkit-text-stroke:0.3px currentColor">ETH</div>
<div class="t" style="left:161.70px;top:359.10px;font-size:5.45px;color:#a6abbc;font-weight:normal;">Ethereum</div>
<div class="t" style="right:335.00px;top:359.10px;font-size:5.4px;color:#4d6ad6;font-weight:normal;">0</div>
<div class="t" style="right:269.50px;top:359.10px;font-size:5.4px;color:#70758a;font-weight:normal;">0</div>
<div class="t" style="right:203.70px;top:359.10px;font-size:5.4px;color:#70758a;font-weight:normal;">0</div>
<div class="t" style="right:137.50px;top:359.10px;font-size:5.33px;color:#555a70;font-weight:normal;">0 USD</div>
<svg style="left:509.4px;top:361.1px" width="6" height="6" viewBox="0 0 6 6"><rect x="0.4" y="0.4" width="5.2" height="5.2" fill="none" stroke="#5a78da" stroke-width="0.7"/><path d="M1.5 3.8 L2.7 2.6 L3.5 3.3 L4.6 2.2" fill="none" stroke="#5a78da" stroke-width="0.55"/></svg>
<div class="t" style="left:523.90px;top:359.10px;font-size:5.6px;color:#5470d6;font-weight:normal;">Deposit</div>
<div class="t" style="left:548.80px;top:359.10px;font-size:5.6px;color:#5470d6;font-weight:normal;">Withdraw</div>
<div class="t" style="left:578.00px;top:359.10px;font-size:5.33px;color:#5470d6;font-weight:normal;">Exchange</div>
<div class="t" style="left:134.70px;top:378.30px;font-size:5.15px;color:#5c78db;font-weight:normal;-webkit-text-stroke:0.3px currentColor">USDT</div>
<div class="t" style="left:161.70px;top:378.30px;font-size:5.45px;color:#a6abbc;font-weight:normal;">Tether</div>
<div class="t" style="right:335.00px;top:378.30px;font-size:5.4px;color:#4d6ad6;font-weight:normal;">0</div>
<div class="t" style="right:269.50px;top:378.30px;font-size:5.4px;color:#70758a;font-weight:normal;">0</div>
<div class="t" style="right:203.70px;top:378.30px;font-size:5.4px;color:#70758a;font-weight:normal;">0</div>
<div class="t" style="right:137.50px;top:378.30px;font-size:5.33px;color:#555a70;font-weight:normal;">0 USD</div>
<svg style="left:509.4px;top:380.3px" width="6" height="6" viewBox="0 0 6 6"><rect x="0.4" y="0.4" width="5.2" height="5.2" fill="none" stroke="#5a78da" stroke-width="0.7"/><path d="M1.5 3.8 L2.7 2.6 L3.5 3.3 L4.6 2.2" fill="none" stroke="#5a78da" stroke-width="0.55"/></svg>
<div class="t" style="left:523.90px;top:378.30px;font-size:5.6px;color:#5470d6;font-weight:normal;">Deposit</div>
<div class="t" style="left:548.80px;top:378.30px;font-size:5.6px;color:#5470d6;font-weight:normal;">Withdraw</div>
<div class="t" style="left:578.00px;top:378.30px;font-size:5.33px;color:#d9dbe3;font-weight:normal;">Exchange</div>
<div class="t" style="left:134.70px;top:397.60px;font-size:5.15px;color:#5c78db;font-weight:normal;-webkit-text-stroke:0.3px currentColor">USDC</div>
<div class="t" style="left:161.70px;top:397.60px;font-size:5.45px;color:#a6abbc;font-weight:normal;">USD//Coin</div>
<div class="t" style="right:335.00px;top:397.60px;font-size:5.4px;color:#4d6ad6;font-weight:normal;">0</div>
<div class="t" style="right:269.50px;top:397.60px;font-size:5.4px;color:#70758a;font-weight:normal;">0</div>
<div class="t" style="right:203.70px;top:397.60px;font-size:5.4px;color:#70758a;font-weight:normal;">0</div>
<div class="t" style="right:137.50px;top:397.60px;font-size:5.33px;color:#555a70;font-weight:normal;">0 USD</div>
<svg style="left:509.4px;top:399.6px" width="6" height="6" viewBox="0 0 6 6"><rect x="0.4" y="0.4" width="5.2" height="5.2" fill="none" stroke="#5a78da" stroke-width="0.7"/><path d="M1.5 3.8 L2.7 2.6 L3.5 3.3 L4.6 2.2" fill="none" stroke="#5a78da" stroke-width="0.55"/></svg>
<div class="t" style="left:523.90px;top:397.60px;font-size:5.6px;color:#5470d6;font-weight:normal;">Deposit</div>
<div class="t" style="left:548.80px;top:397.60px;font-size:5.6px;color:#5470d6;font-weight:normal;">Withdraw</div>
<div class="t" style="left:578.00px;top:397.60px;font-size:5.33px;color:#5470d6;font-weight:normal;">Exchange</div>
<div class="a" style="left:0.00px;top:0.00px;width:4.70px;height:413.00px;background:#4dd5cc"></div>
<div class="a" style="left:4.70px;top:0.00px;width:618.80px;height:2.90px;background:linear-gradient(90deg,#0f1429 0%,#1a2644 25%,#203052 45%,#18223e 65%,#0d1222 90%,#0b0f1c 100%)"></div>
<div class="a" style="left:4.70px;top:2.90px;width:618.80px;height:0.80px;background:rgba(70,120,135,0.35)"></div>
<div class="a" style="left:491.20px;top:0.00px;width:5.80px;height:1.10px;background:#50535f;border-radius:0 0 2px 2px"></div>
<div class="a" style="left:623.50px;top:0.00px;width:5.50px;height:413.00px;background:#4dd5cc"></div>
<div class="a" style="left:0.00px;top:411.10px;width:629.00px;height:1.90px;background:#4dd5cc"></div>
</div>
</body></html>
